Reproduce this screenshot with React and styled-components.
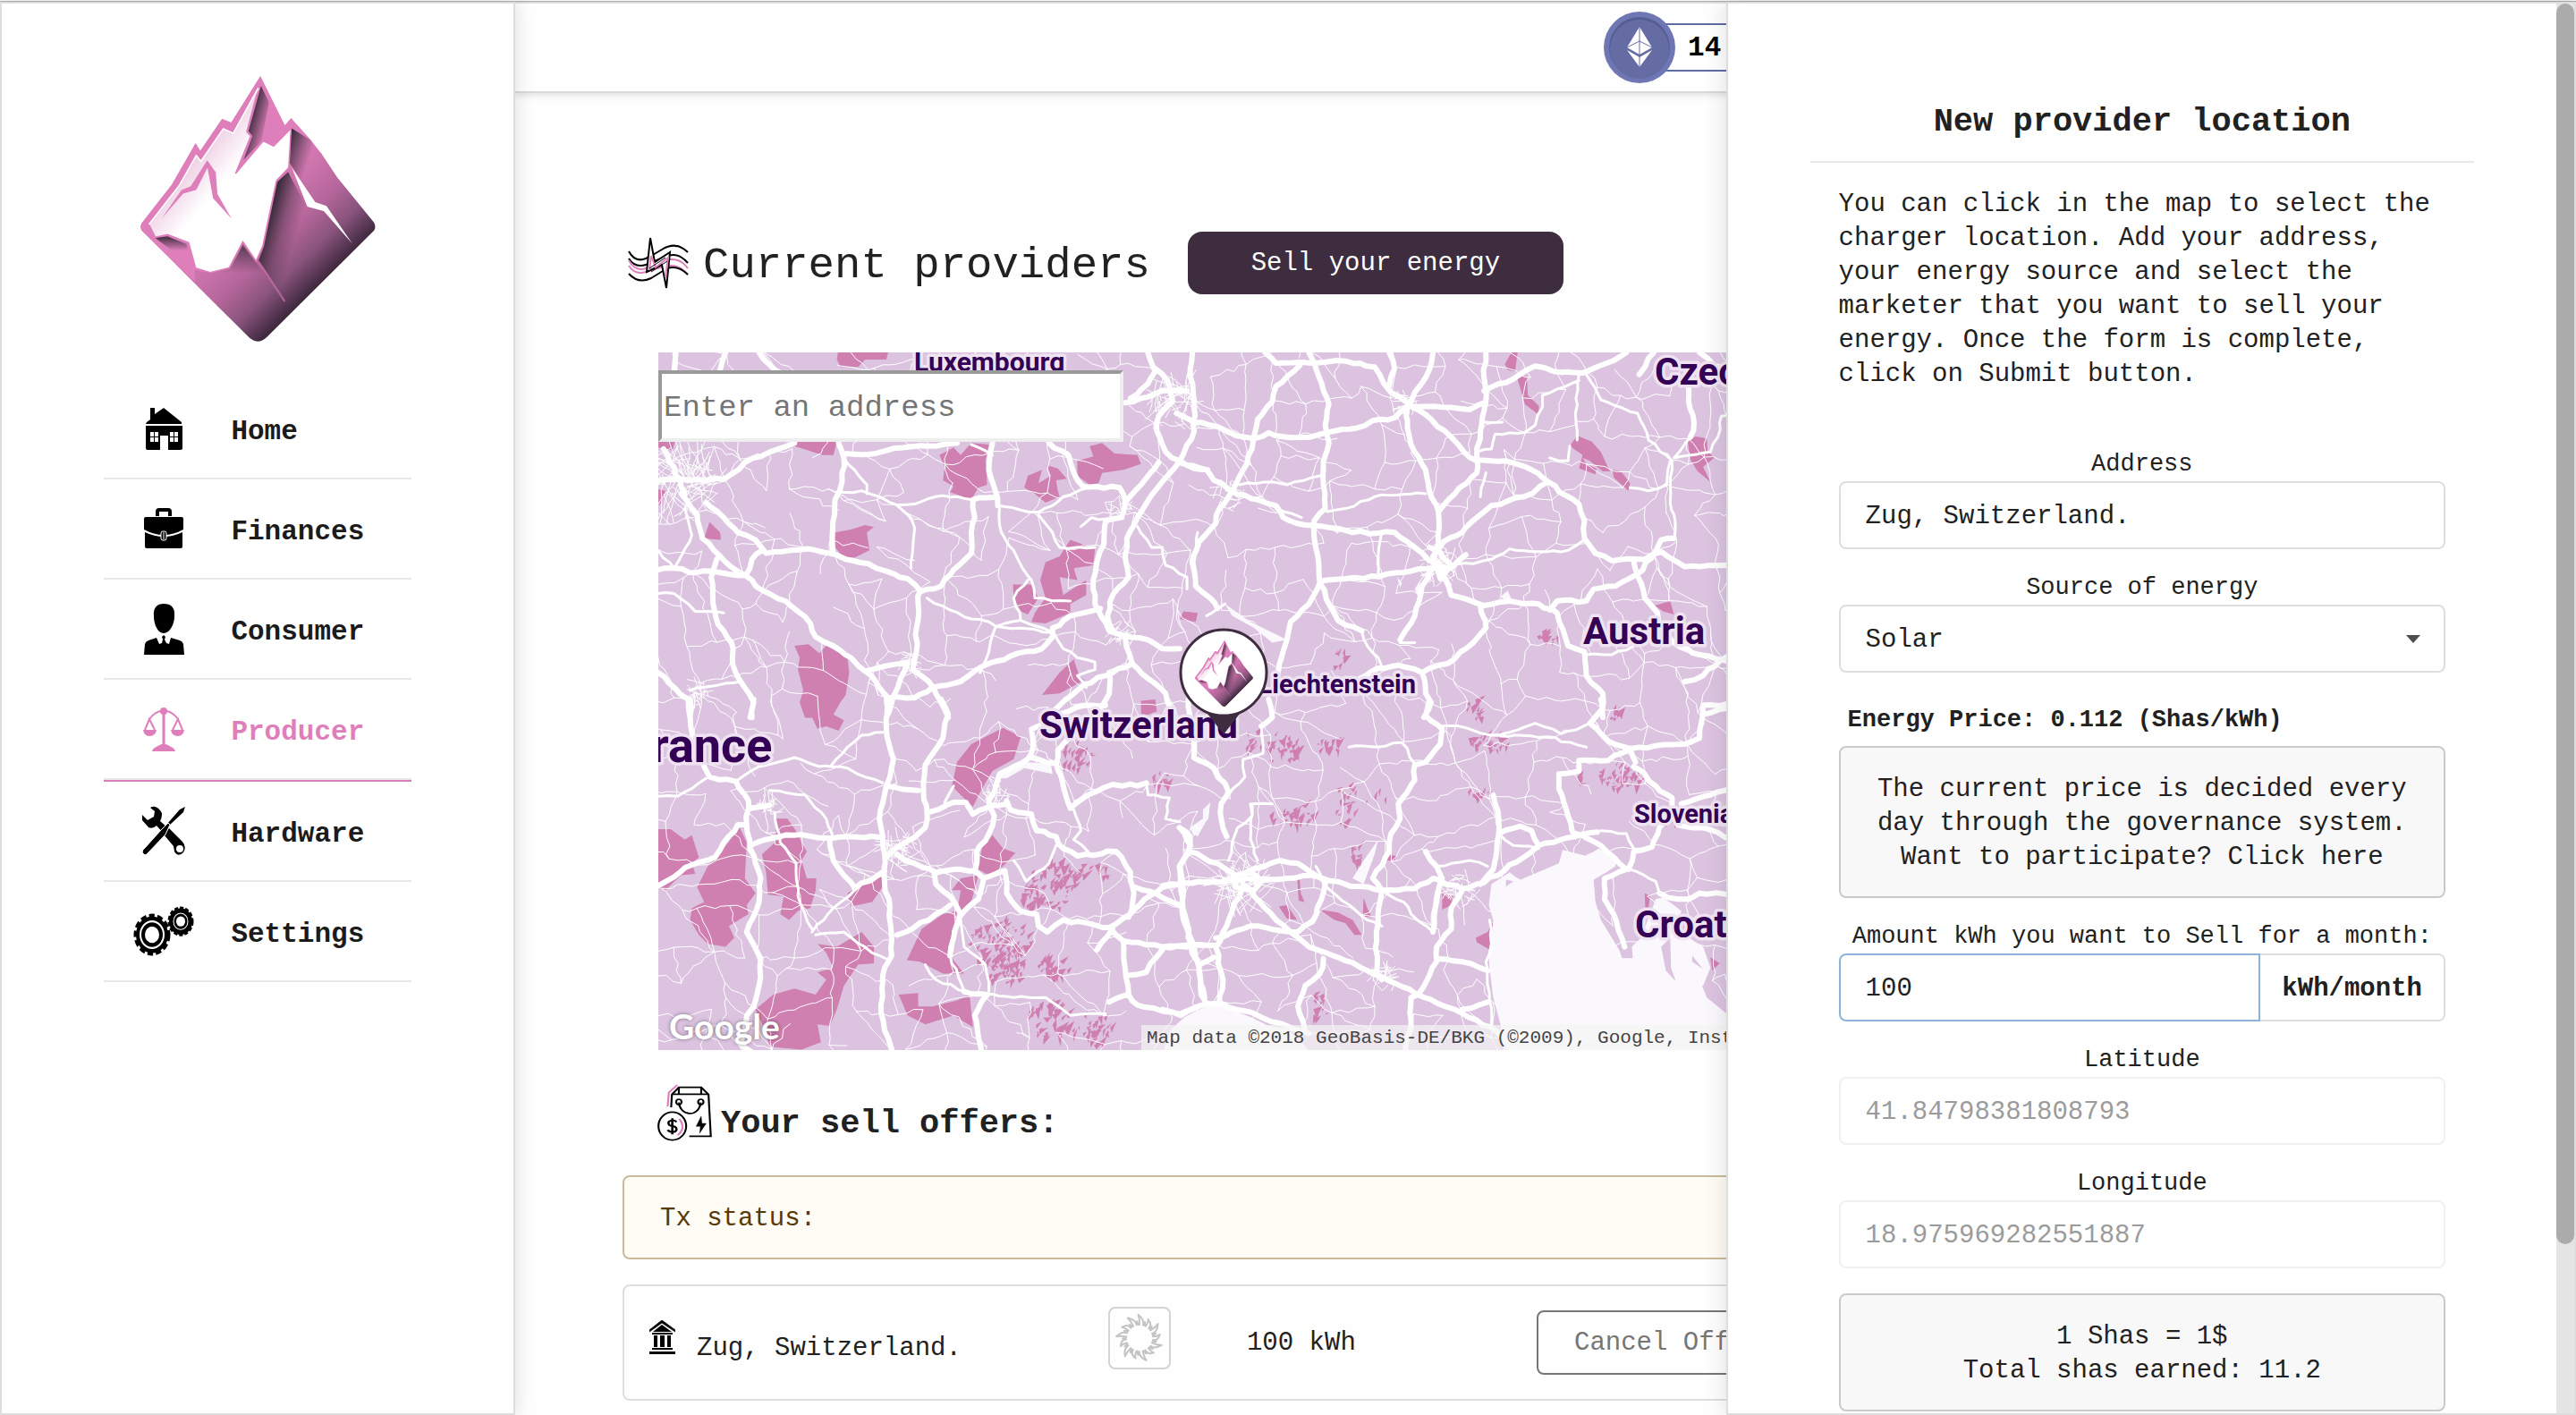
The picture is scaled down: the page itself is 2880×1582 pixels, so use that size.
import { useState } from 'react';
import styled, { createGlobalStyle, css } from 'styled-components';

const MONO = '"Liberation Mono", "DejaVu Sans Mono", monospace';
const PINK = '#de7fbb';
const PLUM = '#3d2d3e';

const GlobalStyle = createGlobalStyle`
  *, *::before, *::after {
    box-sizing: border-box;
  }
  body {
    margin: 0;
    background: #fefefe;
    color: #212121;
    font-family: ${MONO};
    font-size: 29px;
    line-height: 38px;
  }
  button, input, select {
    font: inherit;
    color: inherit;
  }
  svg {
    display: block;
  }
`;

/* ---------- map data ---------- */

// every tile has its own origin and scale, the points below are tile units
const TILES = {
  nw: { x: -6, y: -12, sx: 0.3954, sy: 0.3333 },
  ne: { x: 564, y: -12, sx: 0.4082, sy: 0.3333 },
  sw: { x: -6, y: 388, sx: 0.3954, sy: 0.3333 },
  se: { x: 564, y: 388, sx: 0.4082, sy: 0.3333 },
};

const HIGHWAYS = {
  nw: [
    '15 765 60 760 120 775 165 770 215 780 262 785',
    '80 510 125 580 140 660 190 720 220 755 262 785 310 835 375 870 410 905 445 945 460 990 510 1020 560 1060 600 1105 630 1140 665 1195 740 1195 790 1160 870 1140 930 1090 1010 1055 1100 1030 1130 990 1130 960 1180 920 1265 895',
    '180 730 165 790 170 880 185 950 222 1010 225 1080 245 1135 285 1210 280 1260',
    '150 540 200 590 240 640 290 665 320 710 390 700 440 695 500 710 545 730 610 745 660 770 720 795 758 838 815 820 850 765 900 710 900 640 910 590 905 530 965 522',
    '262 785 280 730 310 700',
    '510 710 508 630 515 530 535 470 540 390 525 340',
    '540 375 610 378 680 358 780 350 860 340',
    '15 465 100 465 200 462 260 405 330 370 400 340',
    '755 838 750 880 745 960 745 1040 735 1100 780 1140 800 1180 835 1260',
    '600 1105 650 1090 720 1075 700 1130 680 1190 660 1260',
    '960 340 950 430 968 500 975 550',
    '1120 340 1175 380 1190 440 1215 485 1320 490 1335 530 1325 590 1280 600 1275 680 1255 740 1245 800 1250 880 1290 970 1330 985 1400 1000 1440 1030 1490 1030',
    '1525 40 1520 120 1530 200 1530 300 1490 400 1440 470 1370 590 1340 660 1335 720 1345 790 1300 850 1285 920 1300 970',
    '1335 205 1380 190 1440 165 1510 165',
    '1400 40 1420 100 1400 140 1350 190',
    '1420 90 1455 130 1470 200 1430 250 1425 300 1450 370 1490 400',
    '1430 405 1380 480 1335 540',
    '1335 990 1355 1080 1400 1130 1450 1180 1470 1260',
    '1355 1080 1280 1120 1220 1150 1150 1220 1110 1260',
    '15 1110 60 1160 100 1200 105 1260',
    '65 36 60 95',
    '205 36 190 95',
    '300 36 345 95',
    '90 510 60 420 30 360',
    '1480 240 1530 270',
    '1290 1110 1290 1180 1265 1230',
    '1490 400 1530 425 1568 430',
  ],
  ne: [
    '90 270 150 285 200 315 250 325 290 305 350 322 405 320 450 305 530 290 575 265 635 255 670 220',
    '45 405 120 430 140 465 180 495 205 512 260 530 310 550 330 590 390 615 440 620 520 640 635 640 690 690 730 735',
    '375 80 310 150 300 200 260 260 248 330 230 410 190 500 155 560 145 610 100 670 80 740 90 820 130 860 150 895',
    '280 36 310 72 405 72 500 65 580 85 605 140 625 170 670 205 735 260 790 320 825 370 860 400',
    '400 36 415 72 435 140 455 210 445 280 455 340 440 400 440 480 445 560 415 600 415 660 425 720 430 810 480 935 545 970',
    '430 810 400 880 350 940 340 1000 325 1060 310 1130',
    '430 805 500 795 550 795 640 775 740 760',
    '740 36 720 120 690 170 670 220 670 290 690 370 720 430 730 500 755 570 755 680 740 740',
    '620 36 635 90 620 150',
    '670 215 765 220 840 228 880 205',
    '885 36 880 120 885 200 870 300 860 390 860 440 800 510 755 570',
    '880 165 960 125 1020 82 1070 100 1150 105 1210 75 1270 36',
    '860 395 940 400 1010 430 1055 470 1140 545 1155 600 1155 660 1185 710 1230 735 1320 730 1365 705 1430 755 1540 750 1600 745',
    '1055 470 990 520 900 550 860 590 820 640 770 670 740 720',
    '755 740 775 800 790 850 880 885 950 870 1030 880 1080 910 1110 1020 1155 1040 1160 1120 1205 1180 1205 1260',
    '740 760 710 820 690 920 650 1000',
    '870 885 885 960 850 1010 780 1080 710 1110 645 1085 590 1095 540 1130',
    '710 1110 720 1180 735 1210 715 1260',
    '1060 900 1080 870 1160 870 1180 830 1240 820 1300 780 1340 725 1365 665 1400 660',
    '1290 740 1320 860 1355 910 1360 960 1400 1010 1470 1050 1540 1070',
    '1560 1040 1480 1120 1430 1140',
    '1345 36 1305 110',
    '1440 130 1440 200 1455 270 1445 320',
    '1478 1260 1480 1220 1545 1215',
    '755 750 790 760 830 715',
    '1470 36 1510 80 1560 100',
    '730 690 755 700 790 750 760 795 740 740',
  ],
  sw: [
    '105 0 110 110 160 260 235 275 270 340 265 420 275 500 305 600 300 680 265 780 305 870 300 960 285 1030 265 1060 250 1160 290 1190',
    '15 625 60 595 110 555 175 530 200 480 240 420 265 420',
    '275 490 340 465 400 455 490 465 550 460 640 462',
    '660 0 660 100 680 200 660 290 640 400 655 520 655 620 670 700 675 860 655 900 645 1050 655 1110 680 1190',
    '815 0 835 50 810 150 770 220 765 310 775 380 770 430 720 475 660 530',
    '660 290 750 305',
    '775 380 850 345 885 345 905 385 960 355 1000 350',
    '500 465 510 540 570 630',
    '570 635 655 575',
    '690 520 740 550 800 580 850 570 910 575 915 510 950 450 965 390 950 340 965 310',
    '795 580 800 620 840 660 870 720 850 800 840 860',
    '690 790 780 740 840 690',
    '870 725 920 670 935 600 995 575 1000 650 1040 710 1085 720 1090 760 1115 780 1160 740 1290 765 1350 720 1390 670 1440 630 1500 615 1568 615',
    '910 575 935 600',
    '965 310 980 250 1060 200 1075 160 1070 100 1150 50 1220 20 1280 20',
    '1070 195 1140 215 1160 290 1180 365 1230 320 1300 285 1370 290 1395 280',
    '1000 340 1010 370 1070 385 1085 440 1140 460 1160 500 1200 525 1310 510 1350 580 1360 650 1345 730',
    '1140 215 1145 170 1175 130',
    '1365 630 1420 650 1490 690',
    '1490 430 1520 490 1490 560 1500 650 1500 740 1520 800 1540 880 1560 1000',
    '1290 765 1330 810 1440 830 1568 825',
    '1330 810 1335 900 1345 990 1370 1025 1490 1055 1540 1030',
    '1440 840 1395 915 1350 925',
    '1300 770 1255 840',
    '1340 990 1290 1015',
    '880 980 945 990 910 1060 930 1190',
    '285 0 275 60',
    '275 365 330 355',
  ],
  se: [
    '70 0 85 130 85 195 140 230 180 310 160 350 160 400 175 460',
    '290 0 300 60 270 90',
    '730 0 720 55 765 100 760 150 720 210 690 220 690 270 645 350 650 400 625 450 620 510 575 600 600 640',
    '0 625 60 615 190 605 340 600 410 590 500 620 600 640 690 635 740 600 820 635 880 615 970 545 1030 490 1130 460 1190 445',
    '230 580 320 540 370 550 440 605',
    '220 620 280 700 350 780 400 830 480 865 600 930 690 985 800 1040 900 1100 960 1180',
    '215 640 175 760 145 830 165 940 155 1020',
    '145 800 240 760 370 780 410 745 445 620',
    '70 510 45 560 60 720 80 850 100 890 105 990 120 1020',
    '100 890 140 865',
    '0 830 145 825',
    '600 640 585 780 585 920 600 940',
    '820 640 790 700 790 770 750 830 750 880 700 990 680 1000 680 1080 665 1190',
    '750 870 820 880 890 910',
    '720 510 750 560 765 600 750 680 740 780',
    '905 320 920 400 915 500 905 570 870 620',
    '920 450 980 425 1010 440 1030 490',
    '1130 460 1110 390 1085 300 1085 250 1140 240 1140 205 1220 205 1280 165',
    '1130 450 1200 490 1250 550 1270 570 1210 600 1210 670 1235 720 1265 830',
    '1275 570 1290 510 1340 495 1360 430 1395 370 1395 330 1350 290 1320 250 1290 225',
    '1200 0 1205 30 1170 80 1220 140 1280 165 1350 155 1430 150 1470 130 1480 50 1545 30',
    '1280 165 1295 210',
    '1410 420 1480 430 1560 470',
    '1420 350 1500 320 1560 295',
    '1360 650 1410 670 1440 670 1470 650 1560 655',
    '440 870 430 920 390 960 370 1030 390 1110',
    '0 1040 50 1060 120 1020 160 1020 260 1060 340 1095 400 1120',
    '820 1040 890 1015',
    '110 530 150 550 200 590 240 580 270 610 250 640 200 630 190 580',
    '45 430 75 460 70 510 110 530',
  ],
};

const ROADS = {
  nw: [
    '520 505 590 500 640 520 690 548 740 545 800 520 860 520 900 530',
    '540 390 570 430 605 480 605 510',
    '690 548 720 580 740 625 735 690 730 760',
    '980 560 985 640 1020 700 1045 760 1070 800 1080 860 1180 870',
    '975 550 1040 565 1090 572 1130 550 1160 520 1230 490',
    '775 860 840 900 900 930 950 940 970 955 1040 935 1130 975',
    '970 955 950 1040 925 1110',
    '15 845 60 845 100 880 120 905 200 910',
    '1090 580 1130 640 1150 690 1250 690',
    '105 1170 250 1140',
    '1370 620 1410 690 1440 690 1450 750 1510 790 1510 830',
    '1210 620 1240 590 1280 595',
    '960 380 900 345',
    '1135 980 1160 1030 1200 1060 1250 1075 1250 1100 1200 1120 1225 1160',
    '1540 640 1530 740 1540 830 1568 850',
    '1040 935 1020 860 1060 800',
    '970 955 1080 965 1130 975',
    '15 700 60 760 110 650 90 560',
  ],
  ne: [
    '790 750 850 745 900 730 950 695 1050 705 1110 700 1155 665',
    '1400 660 1400 580 1390 540 1395 400 1330 330 1300 240 1200 195 1160 110',
    '1445 320 1400 390 1500 370 1520 320 1530 250 1560 245',
    '860 370 900 360 910 310 990 305 1020 280 1040 220 1040 180 1140 130',
    '1140 110 1130 240 1135 330',
    '880 270 930 270',
    '210 480 300 470 340 480 430 450',
    '720 510 640 515 580 520 500 560 450 570',
    '600 640 590 720 590 790',
    '545 970 560 1020 590 1060 600 1090',
    '170 880 120 920',
    '1060 390 1110 400 1115 350',
    '1390 400 1380 480 1330 500 1280 490',
    '1160 1050 1230 1050 1290 1020',
    '885 440 870 520',
    '650 1010 690 1010',
    '310 560 380 590',
  ],
  sw: [
    '240 270 300 225 400 195 470 225 550 230 600 260 650 280',
    '505 220 550 160 590 120 650 110',
    '330 305 430 320 490 400 510 465',
    '15 325 70 325 150 265',
    '345 380 360 480 405 550 410 660 450 770',
    '840 860 880 980',
    '870 740 880 830 940 890 950 980',
    '1020 540 1055 610 1120 550 1140 490',
    '460 790 540 780 620 850 660 870',
    '570 640 510 700 450 780',
    '1490 410 1450 400 1460 330 1400 320 1395 280',
    '850 290 825 345',
    '940 990 1020 1000 1110 1000 1180 1060 1280 1055',
    '770 890 800 940 880 980',
    '1190 370 1210 440 1190 470 1230 510',
  ],
  se: [
    '270 90 275 180 220 200 225 260 180 320',
    '760 90 830 95 900 120 950 110 1020 80 1090 115 1170 80',
    '1280 570 1350 610 1360 650',
    '655 145 690 215',
    '240 350 245 390 205 430 180 540',
    '600 640 660 680 680 720 740 780',
    '890 560 840 540 790 550 750 560',
    '895 740 900 820 885 880 895 1010 900 1090',
    '260 540 240 470 245 350 300 350',
    '420 560 440 620 560 740 600 760',
    '920 450 960 490 1030 500',
    '1200 440 1270 450 1290 500',
    '510 160 530 155 590 160 650 145',
    '900 120 1050 125 1160 160',
    '1360 430 1400 400 1420 350',
  ],
};

const FORESTS = {
  nw: [
    '523 36 665 36 660 60 600 60 580 85 530 85 520 60',
    '15 336 62 336 55 365 15 355',
    '410 336 520 336 510 380 480 380 400 350',
    '15 495 35 500 25 540 15 550',
    '810 380 850 355 870 380 900 340 950 345 940 400 945 480 920 490 900 530 840 505 850 485 820 465 825 420',
    '1050 490 1060 450 1100 430 1090 475 1125 450 1115 415 1145 425 1170 460 1140 465 1145 500 1150 520 1110 540 1080 510',
    '1200 400 1245 385 1235 350 1270 340 1305 375 1370 380 1380 410 1330 430 1270 440 1260 475 1235 480 1200 450',
    '160 605 190 640 192 665 145 660',
    '515 640 560 630 600 615 625 622 605 640 612 700 570 725 540 725 515 690',
    '1180 665 1250 695 1245 750 1190 760 1200 800 1150 790 1160 850 1225 800 1225 850 1180 880 1180 910 1110 945 1070 940 1080 910 1110 860 1095 800 1110 740 1150 720',
    '1018 815 1070 815 1090 860 1060 915 1040 905 1020 860',
    '400 1020 440 1015 470 1045 490 1020 550 1060 555 1110 545 1185 530 1210 505 1262 430 1262 415 1210 425 1170 410 1100 415 1060',
    '1490 930 1500 905 1540 910 1535 940',
    '1190 1065 1205 1120 1220 1135 1150 1180 1100 1185 1150 1110',
    '1380 1205 1420 1200 1425 1240 1380 1260',
  ],
  ne: [
    '955 36 972 36 965 100 945 95 937 75',
    '970 120 997 115 1000 180 1030 215 1030 245 992 210',
    '1115 350 1135 315 1175 335 1200 370 1225 435 1205 435 1170 400 1150 390 1160 410 1188 425 1185 445 1140 425 1150 380',
    '1232 430 1255 435 1280 475 1275 500 1235 455',
    '1437 330 1460 318 1490 325 1492 365 1510 390 1480 420 1500 470 1465 435 1445 395',
    '1348 885 1390 870 1400 915 1370 905',
  ],
  sw: [
    '420 0 530 0 510 50 540 70 525 105 490 90 465 98 450 60 425 40',
    '900 150 990 95 1040 125 1020 200 960 240 930 300 905 360 870 320 845 290 860 210',
    '15 435 50 435 90 470 110 455 130 530 110 550 120 585 80 590 35 640 15 630',
    '245 430 265 480 260 600 290 650 265 690 270 720 215 760 230 800 205 830 155 820 130 790 105 740 110 700 145 680 125 630 155 560 200 500',
    '350 400 380 400 410 450 420 480 435 510 420 540 435 600 462 600 460 640 445 700 410 710 385 740 360 720 370 660 325 655 320 580 308 520 345 480',
    '550 650 650 580 655 620 620 680 560 695',
    '930 500 960 455 990 500 1025 515 990 560 950 590 920 570',
    '870 600 920 590 900 680 860 720 870 640 845 640',
    '820 720 860 710 840 860 880 920 820 920 755 880 718 875 760 770',
    '465 820 520 830 590 780 625 830 625 885 580 890 540 960 520 1040 500 1095 465 1090 475 1150 420 1175 330 1165 320 1120 290 1040 340 990 400 970 460 990 490 940 465 915 510 900 490 850',
    '695 990 750 985 750 1030 790 1030 860 1010 895 990 905 1100 850 1060 770 1090 720 1060',
  ],
  se: [
    '765 645 795 660 790 690 765 705',
    '857 800 890 780 910 735 915 795 935 795 945 840 935 870 910 850 860 815',
    '1320 650 1335 660 1330 700 1322 710',
    '615 520 640 525 635 542 612 540',
    '318 695 340 690 368 740 340 735',
    '430 705 480 715 520 740 545 790 525 790 500 750 470 740',
    '550 665 560 700 572 730 548 730',
    '1500 865 1525 885 1505 910',
    '368 590 374 590 378 650 388 680 372 675',
  ],
};

const WATER = {
  ne: ['170 880 240 940 340 1000 300 1010 250 960 190 920', '925 855 945 835 955 865 940 870', '642 790 655 810 650 825', '690 830 705 800 700 860'],
  sw: ['975 265 990 240 1050 210 1125 215 1130 250 1050 230 1000 265', '1530 450 1568 385 1568 400 1540 460'],
  se: [
    '900 620 950 580 965 595 980 605 1085 550 1095 505 1160 525 1195 500 1240 545 1240 560 1215 580 1180 605 1185 680 1200 740 1250 840 1258 868 1287 868 1285 830 1310 800 1350 670 1370 665 1400 690 1420 710 1410 760 1430 790 1460 815 1480 830 1500 900 1480 960 1500 1000 1545 1050 2600 1190 935 1190 925 1090 905 1000 895 900 892 850 900 800 905 740 893 690',
    '0 1190 20 1110 60 1065 120 1028 160 1028 240 1065 290 1095 340 1105 410 1190',
    '520 600 545 550 590 470 580 520 550 620',
    '75 430 110 400 110 370 130 345 125 400 85 460',
  ],
};

const ISLANDS = {
  se: ['1365 830 1390 800 1392 900 1405 945 1378 910', '1450 860 1480 905 1450 880', '1477 960 1500 960 1545 1030 1545 1055 1490 1000', '940 605 960 610 940 628'],
};

// [tile, cx, cy, rx, ry, count]
const ALPINE = [
  ['sw', 1130, 620, 70, 80, 60],
  ['sw', 1240, 575, 50, 30, 14],
  ['sw', 980, 820, 90, 80, 80],
  ['sw', 990, 900, 60, 50, 45],
  ['sw', 1130, 900, 45, 40, 26],
  ['sw', 1120, 1080, 65, 70, 45],
  ['sw', 1240, 1110, 60, 50, 34],
  ['sw', 1190, 190, 50, 50, 22],
  ['sw', 1440, 270, 30, 30, 10],
  ['sw', 1065, 660, 30, 40, 18],
  ['se', 250, 140, 30, 45, 12],
  ['se', 320, 165, 50, 50, 30],
  ['se', 450, 155, 40, 25, 14],
  ['se', 350, 385, 60, 40, 28],
  ['se', 500, 350, 30, 80, 20],
  ['se', 580, 340, 30, 40, 6],
  ['se', 530, 515, 18, 35, 12],
  ['se', 860, 320, 35, 25, 14],
  ['se', 890, 140, 55, 35, 26],
  ['se', 850, 35, 22, 40, 12],
  ['se', 1250, 260, 60, 45, 45],
  ['se', 1385, 400, 25, 35, 12],
  ['se', 420, 1030, 30, 45, 16],
  ['se', 1135, 275, 30, 15, 6],
  ['ne', 1050, 985, 30, 30, 14],
  ['ne', 475, 1050, 22, 40, 10],
  ['ne', 1235, 1250, 20, 15, 8],
];

// [x, y, radius] in map pixels
const CITIES = [
  [28, 146, 44],
  [574, 54, 30],
  [268, 554, 24],
  [652, 594, 36],
  [870, 238, 24],
  [834, 60, 16],
  [636, 158, 18],
  [124, 506, 14],
  [280, 350, 14],
  [374, 492, 16],
  [516, 312, 16],
  [516, 176, 14],
  [896, 600, 20],
  [810, 700, 18],
  [44, 380, 16],
];

const LABELS = [
  { name: 'Luxembourg', x: 286, y: 21, size: 30 },
  { name: 'Czech', x: 1114, y: 36, size: 42 },
  { name: 'Austria', x: 1034, y: 326, size: 42 },
  { name: 'Liechtenstein', x: 847, y: 381, size: 29, anchor: 'end' },
  { name: 'Switzerland', x: 426, y: 431, size: 42 },
  { name: 'rance', x: -8, y: 458, size: 54 },
  { name: 'Slovenia', x: 1091, y: 526, size: 29 },
  { name: 'Croatia', x: 1092, y: 654, size: 42 },
];

const createRandom = (seed) => () => {
  seed = (seed * 16807) % 2147483647;
  return seed / 2147483647;
};

const toPoints = (tile, line) => {
  const { x, y, sx, sy } = TILES[tile];
  const n = line.split(' ').map(Number);
  const points = [];
  for (let i = 0; i < n.length; i += 2) {
    points.push([x + n[i] * sx, y + n[i + 1] * sy]);
  }
  return points;
};

const toPath = (points) => 'M' + points.map(([x, y]) => `${x.toFixed(1)} ${y.toFixed(1)}`).join('L');

// breaks every segment up so that a road bends a little on its way
const bend = (points, amount, random) => {
  const out = [points[0]];
  for (let i = 1; i < points.length; i++) {
    const [ax, ay] = points[i - 1];
    const [bx, by] = points[i];
    const steps = Math.max(1, Math.round(Math.hypot(bx - ax, by - ay) / 9));
    for (let s = 1; s < steps; s++) {
      out.push([
        ax + ((bx - ax) * s) / steps + (random() - 0.5) * amount,
        ay + ((by - ay) * s) / steps + (random() - 0.5) * amount,
      ]);
    }
    out.push([bx, by]);
  }
  return out;
};

const collect = (source, draw) =>
  Object.entries(source)
    .flatMap(([tile, lines]) => lines.map((line) => draw(toPoints(tile, line))))
    .join('');

const createLanes = () => {
  const random = createRandom(77);
  const cell = 34;
  const cols = 38;
  const rows = 25;
  const node = [];
  for (let r = 0; r < rows; r++) {
    for (let c = 0; c < cols; c++) {
      node.push([(c - 0.5) * cell + (random() - 0.5) * 30, (r - 0.5) * cell + (random() - 0.5) * 30]);
    }
  }
  let d = '';
  for (let r = 0; r < rows - 1; r++) {
    for (let c = 0; c < cols - 1; c++) {
      const i = r * cols + c;
      if (random() < 0.62) d += toPath(bend([node[i], node[i + 1]], 6, random));
      if (random() < 0.62) d += toPath(bend([node[i], node[i + cols]], 6, random));
      if (random() < 0.22) d += toPath(bend([node[i], node[i + cols + 1]], 6, random));
    }
  }
  CITIES.forEach(([x, y, radius]) => {
    for (let i = 0; i < radius * 1.5; i++) {
      const a = random() * 6.28;
      const b = a + random() * 1.6;
      const p = radius * (0.2 + random());
      const q = radius * random();
      d += toPath(bend([[x + Math.cos(a) * p, y + Math.sin(a) * p], [x + Math.cos(b) * q, y + Math.sin(b) * q]], 3, random));
    }
  });
  return d;
};

const createShards = () => {
  const random = createRandom(411);
  return ALPINE.map(([tile, cx, cy, rx, ry, count]) => {
    const t = TILES[tile];
    let d = '';
    for (let i = 0; i < count; i++) {
      const a = random() * 6.28;
      const far = Math.sqrt(random());
      const x = t.x + (cx + Math.cos(a) * far * rx) * t.sx;
      const y = t.y + (cy + Math.sin(a) * far * ry) * t.sy;
      const size = 3 + random() * 6;
      d += `${toPath([
        [x, y],
        [x + size * (0.4 + random()), y - size * random()],
        [x + size * random() * 0.6, y + size * (0.3 + random())],
      ])}Z`;
    }
    return d;
  }).join('');
};

const roadRandom = createRandom(9);
const MAP = {
  lanes: createLanes(),
  shards: createShards(),
  forests: collect(FORESTS, (points) => `${toPath(points)}Z`),
  water: collect(WATER, (points) => `${toPath(points)}Z`),
  islands: collect(ISLANDS, (points) => `${toPath(points)}Z`),
  highways: collect(HIGHWAYS, (points) => toPath(bend(points, 3, roadRandom))),
  roads: collect(ROADS, (points) => toPath(bend(points, 3, roadRandom))),
};

/* ---------- drawings ---------- */

const Logo = ({ id, ...rest }) => (
  <svg viewBox="423 237 712 834" preserveAspectRatio="none" aria-hidden="true" {...rest}>
    <defs>
      <linearGradient id={`${id}-face`} gradientUnits="userSpaceOnUse" x1="675" y1="675" x2="927" y2="927">
        <stop offset="0" stopColor="#de7fbb" />
        <stop offset="0.5" stopColor="#b5669a" />
        <stop offset="0.75" stopColor="#8a547e" />
        <stop offset="1" stopColor="#40293f" />
      </linearGradient>
      <linearGradient id={`${id}-cliff`} gradientUnits="userSpaceOnUse" x1="815" y1="680" x2="905" y2="705">
        <stop offset="0" stopColor="#3d2d3e" />
        <stop offset="0.5" stopColor="#3d2d3e" stopOpacity="0.4" />
        <stop offset="1" stopColor="#3d2d3e" stopOpacity="0" />
      </linearGradient>
      <linearGradient id={`${id}-side`} gradientUnits="userSpaceOnUse" x1="872" y1="440" x2="945" y2="465">
        <stop offset="0" stopColor="#3d2d3e" />
        <stop offset="1" stopColor="#3d2d3e" stopOpacity="0" />
      </linearGradient>
      <linearGradient id={`${id}-peak`} gradientUnits="userSpaceOnUse" x1="755" y1="370" x2="812" y2="385">
        <stop offset="0" stopColor="#3d2d3e" />
        <stop offset="1" stopColor="#3d2d3e" stopOpacity="0" />
      </linearGradient>
      <linearGradient id={`${id}-foot`} x1="0" y1="0" x2="0" y2="1">
        <stop offset="0" stopColor="#3d2d3e" />
        <stop offset="0.5" stopColor="#3d2d3e" stopOpacity="0" />
      </linearGradient>
      <linearGradient id={`${id}-snow`} gradientUnits="userSpaceOnUse" x1="580" y1="480" x2="680" y2="560">
        <stop offset="0" stopColor="#ecc9e0" />
        <stop offset="1" stopColor="#ffffff" />
      </linearGradient>
    </defs>
    <path
      d="M786 238L860 392L879 370L940 440L970 480L1018 555L1130 697Q1137 711 1130 722L806 1056Q780 1082 754 1060L427 722Q421 711 427 699L518 578L590 448L604 472L670 372L698 383Z"
      fill={`url(#${id}-face)`}
    />
    <path d="M786 238L860 392L879 370L940 440L830 520L588 882L427 722Q421 711 427 699L518 578L590 448L604 472L670 372L698 383Z" fill="#de7fbb" />
    <path d="M879 400L970 480L1018 555L1100 660L1062 762L985 645L952 632L875 510Z" fill={`url(#${id}-face)`} />
    <path d="M879 400L940 440L1000 640L952 632L875 510Z" fill={`url(#${id}-side)`} />
    <path d="M870 538L925 650L978 662L1062 762L864 945L780 818L797 772L837 570Z" fill={`url(#${id}-face)`} />
    <path d="M870 538L925 650L978 662L1040 740L864 945L780 818L797 772L837 570Z" fill={`url(#${id}-cliff)`} />
    <path d="M588 846L634 860L694 845L733 768L860 945L778 1060L588 882Z" fill={`url(#${id}-face)`} />
    <path d="M588 846L634 860L694 845L733 768L860 945L700 900L588 882Z" fill={`url(#${id}-foot)`} opacity="0.8" />
    <path d="M780 818L860 945" stroke="#c873a9" strokeWidth="6" opacity="0.7" />
    <path d="M468 745L505 740L563 765L575 830Z" fill={`url(#${id}-foot)`} />
    <path d="M788 268L812 320L790 440L735 500L762 425L750 410Z" fill={`url(#${id}-peak)`} />
    <path
      d="M780 275L745 412L757 425L711 543L795 441L826 457L879 401L872 525L835 565L793 772L773 818L733 757L692 839L634 854L590 840L569 760L505 735L468 743L449 703L540 582L592 487L606 505L674 403L704 417Z"
      fill={`url(#${id}-snow)`}
      stroke={PINK}
      strokeWidth="4"
    />
    <path d="M780 275L704 417L674 403L606 505L592 487L540 582L449 703" fill="none" stroke="#fff" strokeWidth="5" />
    <path d="M487 685L547 595L575 583L625 502L651 539L656 607L699 685L643 621L626 525L592 594L552 606Z" fill="#de7fbb" />
    <path d="M881 524L952 633L986 645L1064 763L978 661L928 647Z" fill="#fff" />
  </svg>
);

const HomeIcon = () => (
  <svg width="41" height="47" viewBox="0 0 41 47" aria-hidden="true">
    <path d="M1 16L5 13V0H10V7L20 0L40 16V18H0Z" />
    <path d="M0 20H41V45Q41 47 39 47H25V31H16V47H2Q0 47 0 45Z" />
    <path d="M5 27h4v5h-4zM10 27h4v5h-4zM5 33h4v5h-4zM10 33h4v5h-4zM27 27h4v5h-4zM32 27h4v5h-4zM27 33h4v5h-4zM32 33h4v5h-4z" fill="#fff" />
  </svg>
);

const BriefcaseIcon = () => (
  <svg width="44" height="46" viewBox="0 0 44 46" aria-hidden="true">
    <path d="M15 9V4Q15 2 17 2H27Q29 2 29 4V9" fill="none" stroke="currentColor" strokeWidth="4" />
    <path d="M2 10H42Q44 10 44 12V24Q22 36 0 24V12Q0 10 2 10Z" />
    <path d="M1 27Q22 37 43 27V43Q43 45 41 45H3Q1 45 1 43Z" />
    <rect x="19" y="26" width="6" height="10" rx="2" fill="#000" stroke="#fff" />
    <path d="M22 27V35" stroke="#fff" />
  </svg>
);

const ConsumerIcon = () => (
  <svg width="45" height="57" viewBox="0 0 45 57" aria-hidden="true">
    <path d="M22 0C30 0 35 4 34 14C34 24 28 33 22 33C16 33 11 24 11 14C10 4 15 0 22 0Z" />
    <path d="M0 57L1 45Q2 42 5 41L14 38L17 45L20 44L21 40L20 37L22 35L24 37L23 40L25 44L28 45L30 38L40 41Q43 42 44 45L45 57Z" />
  </svg>
);

const ScalesIcon = () => (
  <svg width="46" height="51" viewBox="0 0 46 51" aria-hidden="true">
    <circle cx="23" cy="5" r="4" />
    <path d="M22 5H24V44H22Z" stroke="currentColor" />
    <path d="M10 50Q10 46 23 41Q36 46 36 50Z" />
    <path d="M7 14Q14 4 23 5Q32 4 39 14" fill="none" stroke="currentColor" strokeWidth="2" />
    <path d="M2 26L7 14L13 26M33 26L39 14L44 26" fill="none" stroke="currentColor" strokeWidth="2" />
    <path d="M0 26H15Q14 33 7 33Q1 33 0 26ZM31 26H46Q45 33 39 33Q32 33 31 26Z" />
  </svg>
);

const ToolsIcon = () => (
  <svg width="49" height="56" viewBox="0 0 49 56" aria-hidden="true">
    <path d="M9 2Q16-2 22 8Q22 14 20 17L29 25L24 31L16 22Q12 26 7 24L0 16V10L6 16L13 12L14 6Z" />
    <path d="M24 32L30 25L45 40Q50 46 46 52Q40 58 36 51L35 45Z" />
    <circle cx="42" cy="48" r="4" fill="#fff" />
    <path d="M48 1L42 4L28 20L30 22L46 7Z" />
    <path d="M29 19L31 21L26 32L6 53Q3 57 0 52Q0 49 3 47L21 27Z" stroke="#fff" />
  </svg>
);

const GearsIcon = () => (
  <svg width="68" height="56" viewBox="0 0 68 49" preserveAspectRatio="none" aria-hidden="true">
    <circle cx="21" cy="28" r="18" />
    <circle cx="21" cy="28" r="18" fill="none" stroke="currentColor" strokeWidth="5" strokeDasharray="6 3" />
    <circle cx="21" cy="28" r="13" fill="none" stroke="#fff" strokeWidth="2" />
    <circle cx="21" cy="28" r="8" fill="#fff" />
    <circle cx="53" cy="15" r="13" />
    <circle cx="53" cy="15" r="13" fill="none" stroke="currentColor" strokeWidth="3" strokeDasharray="4 2" />
    <circle cx="53" cy="15" r="8" fill="none" stroke="#fff" strokeWidth="1" />
    <circle cx="53" cy="15" r="5" fill="#fff" />
  </svg>
);

const WaveIcon = () => (
  <svg width="68" height="60" viewBox="0 0 68 60" fill="none" stroke="#000" strokeWidth="2" aria-hidden="true">
    <path d="M1 17Q8 30 20 25Q30 20 38 15Q54 5 67 18" />
    <path d="M1 25Q8 36 20 32Q30 28 42 23Q56 17 67 30" />
    <path d="M1 27Q8 40 20 36Q30 32 42 27Q58 23 67 36" stroke={PINK} />
    <path d="M1 33Q8 44 20 40Q30 36 42 34Q56 30 67 43" stroke={PINK} />
    <path d="M1 42Q12 54 26 47Q34 42 44 36Q56 32 67 43" />
    <path d="M21 40L25 2L30 29L47 18L43 58L38 32Z" fill="#fff" />
    <path d="M24 38L26 22L31 35L45 24L42 46" stroke={PINK} />
    <path d="M24 36L42 24M26 40L44 28" strokeWidth="1" />
  </svg>
);

const OffersIcon = () => (
  <svg width="62" height="64" viewBox="124 90 144 192" preserveAspectRatio="none" fill="none" stroke="#000" strokeWidth="5" aria-hidden="true">
    <path d="M153 165L156 118L178 93" stroke={PINK} />
    <path d="M162 168L164 125L182 101H240L259 125L265 265H209" />
    <path d="M164 124H259M182 101V124M240 101V124" />
    <ellipse cx="182" cy="150" rx="7" ry="9" />
    <ellipse cx="239" cy="150" rx="7" ry="9" />
    <path d="M182 152C186 200 234 202 239 152" />
    <ellipse cx="165" cy="231" rx="36" ry="47" fill="#fff" />
    <path d="M183 207Q202 235 179 262" stroke={PINK} />
    <path d="M176 217Q170 211 165 212Q154 213 155 222Q156 230 165 231Q176 233 176 242Q175 251 165 251Q157 251 153 244M165 205V259" strokeWidth="6" />
    <path d="M240 198L227 232H238L236 255L253 222H242Z" fill="#000" strokeWidth="1" />
  </svg>
);

const BankIcon = () => (
  <svg width="29" height="38" viewBox="0 0 29 38" aria-hidden="true">
    <path d="M14 0L29 11V13L14 3L0 13V11Z" stroke="currentColor" />
    <path d="M14 5L25 13H4Z" />
    <path d="M3 14H26V16H3ZM5 17H9V30H5ZM12 17H17V30H12ZM20 17H24V30H20ZM3 31H26V33H3ZM0 35H29V38H0Z" />
  </svg>
);

const flames = Array.from({ length: 13 }, (_, i) => {
  const at = (angle, radius) => {
    const a = ((angle - 90) * Math.PI) / 180;
    return `${(35 + Math.cos(a) * radius).toFixed(1)} ${(35 + Math.sin(a) * radius).toFixed(1)}`;
  };
  const a = (i * 360) / 13;
  const tip = i % 2 ? 23 : 26;
  return `${i ? 'L' : 'M'}${at(a, 15)}Q${at(a + 1, 21)} ${at(a - 3, tip)}Q${at(a + 16, 21)} ${at(a + 15, 15)}L${at(a + 19, 19)}L${at(a + 23, 15)}`;
}).join('');

const SunIcon = () => (
  <svg width="66" height="66" viewBox="2 2 66 66" fill="none" stroke="#c4c4c4" strokeWidth="2" strokeLinejoin="round" aria-hidden="true">
    <path d={`${flames}Z`} />
  </svg>
);

const EtherIcon = () => (
  <svg width="80" height="80" viewBox="0 0 80 80" aria-hidden="true">
    <circle cx="40" cy="40" r="40" fill="#6e77b4" />
    <circle cx="40" cy="40" r="34" fill="#565d92" />
    <circle cx="40" cy="42" r="33" fill="#656ca4" />
    <path d="M40 17L54 40L40 48L26 40Z" fill="#fff" />
    <path d="M26 43L40 51L54 43L40 62Z" fill="#fff" />
    <path d="M40 17V62M26 40L40 33L54 40" fill="none" stroke="#656ca4" />
  </svg>
);

/* ---------- layout ---------- */

const Page = styled.div`
  position: relative;
  display: flex;
  flex-direction: column;
  height: 100vh;
  overflow: hidden;
`;

const TopLine = styled.div`
  flex: none;
  height: 2px;
  border-bottom: 1px solid #b0b3b2;
`;

const Shell = styled.div`
  display: flex;
  flex: 1;
  min-height: 0;
`;

const Sidebar = styled.aside`
  z-index: 2;
  display: flex;
  flex-direction: column;
  align-items: center;
  gap: 42px;
  width: 20%;
  padding-top: 81px;
  border: 2px solid #dedede;
  background: #fff;
  box-shadow: 0 0 20px rgba(34, 36, 38, 0.15);
`;

const SidebarLogo = styled(Logo)`
  flex: none;
  width: 263px;
  height: 297px;
`;

const NavList = styled.ul`
  width: 60%;
  margin: 0;
  padding: 0;
  list-style: none;
`;

const NavItem = styled.li`
  ${({ $active }) => $active && css`
    border-bottom: 2px solid ${PINK};
  `}
`;

const NavLink = styled.a`
  display: flex;
  align-items: center;
  gap: 37px;
  height: 112px;
  padding-left: 29px;
  border-bottom: 2px solid #e8e8e8;
  color: ${({ $active }) => ($active ? PINK : '#1b1b1b')};
  font-size: 31px;
  font-weight: bold;
  text-decoration: none;

  svg {
    fill: currentColor;
    color: ${({ $active }) => ($active ? PINK : '#000')};
  }
`;

const NavIcon = styled.span`
  display: flex;
  justify-content: center;
  width: 76px;
`;

const NavName = styled.span`
  padding-top: 8px;
`;

const Main = styled.main`
  display: flex;
  flex: 1;
  flex-direction: column;
  min-width: 0;
`;

const TopBar = styled.header`
  display: flex;
  flex: none;
  align-items: center;
  height: 102px;
  padding-left: calc(53% - 4px);
  border-top: 2px solid #dedede;
  border-bottom: 2px solid #d9d9d9;
  box-shadow: 0 2px 8px rgba(34, 36, 38, 0.15);
`;

const Balance = styled.div`
  display: flex;
  align-items: center;

  svg {
    z-index: 1;
    margin-right: -26px;
  }
`;

const BalanceValue = styled.span`
  padding: 7px 32px 5px 38px;
  border: 2px solid #5f6ba5;
  border-radius: 4px;
  background: #fff;
  color: #000;
  font-size: 31px;
  font-weight: bold;
`;

const Content = styled.div`
  padding: 154px 140px 0 120px;
`;

const TitleRow = styled.div`
  display: flex;
  align-items: center;
  gap: 42px;
  padding-left: 6px;
`;

const PageTitle = styled.h1`
  display: flex;
  align-items: center;
  gap: 16px;
  margin: 0;
  padding-top: 6px;
  font-size: 49px;
  font-weight: normal;
  line-height: 60px;

  svg {
    margin-bottom: 6px;
  }
`;

const SellButton = styled.button`
  width: 420px;
  height: 70px;
  padding: 2px 0 0;
  border: 0;
  border-radius: 16px;
  background: ${PLUM};
  color: #fff;
`;

const MapFrame = styled.section`
  position: relative;
  height: 780px;
  margin: 64px 40px 0;
  overflow: hidden;
`;

const MapCanvas = styled.svg`
  width: 100%;
  height: 780px;
  background: #dcc4e1;
`;

const MapLabel = styled.text`
  fill: #330056;
  font-family: Roboto, sans-serif;
  font-weight: bold;
  stroke: #efe3f2;
  stroke-width: 7px;
  stroke-linejoin: round;
  paint-order: stroke;
`;

const MapSearch = styled.input`
  position: absolute;
  top: 20px;
  left: 0;
  width: 520px;
  height: 80px;
  padding: 3px 2px 0;
  border: 4px solid;
  border-color: #9a9a9a #eee #eee #9a9a9a;
  background: #fff;
  font-size: 34px;

  &::placeholder {
    color: #757575;
    opacity: 1;
  }
`;

const MapBrand = styled.span`
  position: absolute;
  bottom: 8px;
  left: 12px;
  color: #fff;
  font-family: Lato, sans-serif;
  font-size: 39px;
  font-weight: bold;
  text-shadow: 0 0 4px rgba(0, 0, 0, 0.45);
`;

const MapCredits = styled.span`
  position: absolute;
  right: 0;
  bottom: 0;
  left: 540px;
  padding: 2px 0 0 6px;
  background: rgba(245, 245, 245, 0.7);
  color: #444;
  font-size: 21px;
  line-height: 26px;
  white-space: nowrap;
`;

const OffersTitle = styled.h2`
  display: flex;
  align-items: flex-end;
  gap: 10px;
  margin: 38px 38px 0;
  font-size: 37px;
  line-height: 40px;
`;

const TxMessage = styled.div`
  margin-top: 38px;
  padding: 28px 40px 24px;
  border: 2px solid #c9ba9b;
  border-radius: 8px;
  background: #fffbf5;
  color: #573a08;
`;

const OfferCard = styled.div`
  display: grid;
  grid-template-columns: 103fr 31fr 65fr 199fr;
  align-items: center;
  height: 130px;
  margin-top: 28px;
  padding: 0 28px;
  border: 2px solid #dedede;
  border-radius: 8px;
`;

const OfferPlace = styled.div`
  display: flex;
  gap: 24px;
`;

const PlaceName = styled.span`
  padding-top: 13px;
`;

const OfferAmount = styled.span`
  padding-top: 2px;
`;

const SourceBadge = styled.span`
  display: grid;
  place-items: center;
  width: 70px;
  height: 70px;
  margin-bottom: 10px;
  border: 2px solid #d4d4d4;
  border-radius: 8px;
`;

const CancelButton = styled.button`
  justify-self: start;
  height: 72px;
  padding: 2px 40px 0;
  border: 2px solid #767676;
  border-radius: 8px;
  background: transparent;
  color: #767676;
`;

const Panel = styled.aside`
  position: absolute;
  z-index: 3;
  top: 2px;
  right: 0;
  bottom: 0;
  display: flex;
  width: 33%;
  border: 2px solid #dedede;
  background: #fff;
  box-shadow: 0 0 24px rgba(34, 36, 38, 0.15);
`;

const PanelBody = styled.div`
  flex: 1;
  overflow: hidden;
  padding: 108px 92px 0;
`;

const PanelTitle = styled.h2`
  margin: 0;
  padding-bottom: 20px;
  border-bottom: 2px solid #e8e8e8;
  font-size: 37px;
  line-height: 48px;
  text-align: center;
`;

const ScrollTrack = styled.div`
  width: 20px;
  background: #e4e4e4;
`;

const ScrollThumb = styled.div`
  height: 88%;
  border-radius: 10px;
  background: #ababab;
`;

const Form = styled.form`
  display: flex;
  flex-direction: column;
  gap: 28px;
  padding: 28px 32px 0;
`;

const Intro = styled.p`
  margin: 0 0 38px;
`;

const Field = styled.div`
  display: flex;
  flex-direction: column;
  gap: 6px;
`;

const FieldLabel = styled.label`
  padding-top: 2px;
  font-size: 27px;
  line-height: 26px;
  text-align: center;
  white-space: nowrap;
`;

const controlStyle = css`
  width: 100%;
  height: 76px;
  padding: 3px 28px 0;
  border: 2px solid #dedede;
  border-radius: 8px;
  outline: 0;
  background: #fff;

  &:disabled {
    border-color: #f0f0f0;
    color: #9b9b9b;
    opacity: 1;
  }
`;

const TextInput = styled.input`
  ${controlStyle}
`;

const SelectBox = styled.div`
  position: relative;

  svg {
    position: absolute;
    top: 34px;
    right: 28px;
  }
`;

const Select = styled.select`
  ${controlStyle}
  appearance: none;
`;

const UnitInput = styled.div`
  display: flex;
`;

const AmountInput = styled.input`
  ${controlStyle}
  flex: 1;
  min-width: 0;
  border-color: #8db3d9;
  border-radius: 8px 0 0 8px;
`;

const Unit = styled.span`
  display: flex;
  align-items: center;
  padding: 3px 24px 0;
  border: 2px solid #dedede;
  border-left: 0;
  border-radius: 0 8px 8px 0;
  font-weight: bold;
`;

const PriceBlock = styled.div`
  display: flex;
  flex-direction: column;
  gap: 10px;
  padding-top: 6px;
`;

const Price = styled.strong`
  padding-left: 10px;
  font-size: 27px;
`;

const Message = styled.div`
  padding: 28px 32px 24px;
  border: 2px solid #cacaca;
  border-radius: 8px;
  background: #f8f8f8;
  text-align: center;

  p {
    margin: 0;
  }
`;

const NAV = [
  { name: 'Home', Icon: HomeIcon },
  { name: 'Finances', Icon: BriefcaseIcon },
  { name: 'Consumer', Icon: ConsumerIcon },
  { name: 'Producer', Icon: ScalesIcon },
  { name: 'Hardware', Icon: ToolsIcon },
  { name: 'Settings', Icon: GearsIcon },
];

const Navigation = ({ current }) => (
  <Sidebar>
    <SidebarLogo id="brand" />
    <NavList>
      {NAV.map(({ name, Icon }) => (
        <NavItem key={name} $active={name === current}>
          <NavLink href={`#${name.toLowerCase()}`} $active={name === current}>
            <NavIcon>
              <Icon />
            </NavIcon>
            <NavName>{name}</NavName>
          </NavLink>
        </NavItem>
      ))}
    </NavList>
  </Sidebar>
);

const ProvidersMap = () => (
  <MapFrame>
    <MapCanvas>
      <path d={MAP.forests} fill="#cf7fb0" />
      <path d={MAP.shards} fill="#cf7fb0" />
      <g fill="none" stroke="#fff" strokeLinejoin="round" strokeLinecap="round">
        <path d={MAP.lanes} strokeWidth="1" />
      </g>
      <path d={MAP.water} fill="#faf8fc" />
      <path d={MAP.islands} fill="#dcc4e1" />
      <g fill="none" stroke="#fff" strokeLinejoin="round" strokeLinecap="round">
        <path d={MAP.roads} strokeWidth="3" />
        <path d={MAP.highways} strokeWidth="6" />
      </g>
      {LABELS.map(({ name, x, y, size, anchor }) => (
        <MapLabel key={name} x={x} y={y} fontSize={size} textAnchor={anchor}>
          {name}
        </MapLabel>
      ))}
      <path d="M614 404H650L632 427Z" fill={PLUM} />
      <circle cx="632" cy="358" r="48" fill="#fff" stroke={PLUM} strokeWidth="3" />
      <Logo id="pin" x="600" y="322" width="65" height="74" />
    </MapCanvas>
    <MapSearch type="text" placeholder="Enter an address" aria-label="Enter an address" />
    <MapBrand>Google</MapBrand>
    <MapCredits>Map data ©2018 GeoBasis-DE/BKG (©2009), Google, Inst</MapCredits>
  </MapFrame>
);

const ProviderForm = () => {
  const [address, setAddress] = useState('Zug, Switzerland.');
  const [amount, setAmount] = useState('100');

  return (
    <Panel>
      <PanelBody>
        <PanelTitle>New provider location</PanelTitle>
        <Form>
          <Intro>
            You can click in the map to select the charger location. Add your address, your energy source and select the
            marketer that you want to sell your energy. Once the form is complete, click on Submit button.
          </Intro>
          <Field>
            <FieldLabel htmlFor="address">Address</FieldLabel>
            <TextInput id="address" value={address} onChange={(e) => setAddress(e.target.value)} />
          </Field>
          <Field>
            <FieldLabel htmlFor="source">Source of energy</FieldLabel>
            <SelectBox>
              <Select id="source" defaultValue="solar">
                <option value="solar">Solar</option>
              </Select>
              <svg width="16" height="9" viewBox="0 0 16 9" aria-hidden="true">
                <path d="M0 0H16L8 9Z" fill="#4d4d4d" />
              </svg>
            </SelectBox>
          </Field>
          <PriceBlock>
            <Price>Energy Price: 0.112 (Shas/kWh)</Price>
            <Message>
              <p>The current price is decided every day through the governance system. Want to participate? Click here</p>
            </Message>
          </PriceBlock>
          <Field>
            <FieldLabel htmlFor="amount">Amount kWh you want to Sell for a month:</FieldLabel>
            <UnitInput>
              <AmountInput id="amount" value={amount} onChange={(e) => setAmount(e.target.value)} />
              <Unit>kWh/month</Unit>
            </UnitInput>
          </Field>
          <Field>
            <FieldLabel htmlFor="latitude">Latitude</FieldLabel>
            <TextInput id="latitude" value="41.84798381808793" disabled readOnly />
          </Field>
          <Field>
            <FieldLabel htmlFor="longitude">Longitude</FieldLabel>
            <TextInput id="longitude" value="18.975969282551887" disabled readOnly />
          </Field>
          <Message>
            <p>1 Shas = 1$</p>
            <p>Total shas earned: 11.2</p>
          </Message>
        </Form>
      </PanelBody>
      <ScrollTrack>
        <ScrollThumb />
      </ScrollTrack>
    </Panel>
  );
};

const App = () => (
  <Page>
    <GlobalStyle />
    <TopLine />
    <Shell>
      <Navigation current="Producer" />
      <Main>
        <TopBar>
          <Balance>
            <EtherIcon />
            <BalanceValue>14.</BalanceValue>
          </Balance>
        </TopBar>
        <Content>
          <TitleRow>
            <PageTitle>
              <WaveIcon />
              Current providers
            </PageTitle>
            <SellButton type="button">Sell your energy</SellButton>
          </TitleRow>
          <ProvidersMap />
          <OffersTitle>
            <OffersIcon />
            Your sell offers:
          </OffersTitle>
          <TxMessage>Tx status:</TxMessage>
          <OfferCard>
            <OfferPlace>
              <BankIcon />
              <PlaceName>Zug, Switzerland.</PlaceName>
            </OfferPlace>
            <SourceBadge>
              <SunIcon />
            </SourceBadge>
            <OfferAmount>100 kWh</OfferAmount>
            <CancelButton type="button">Cancel Offer</CancelButton>
          </OfferCard>
        </Content>
      </Main>
    </Shell>
    <ProviderForm />
  </Page>
);

export default App;
